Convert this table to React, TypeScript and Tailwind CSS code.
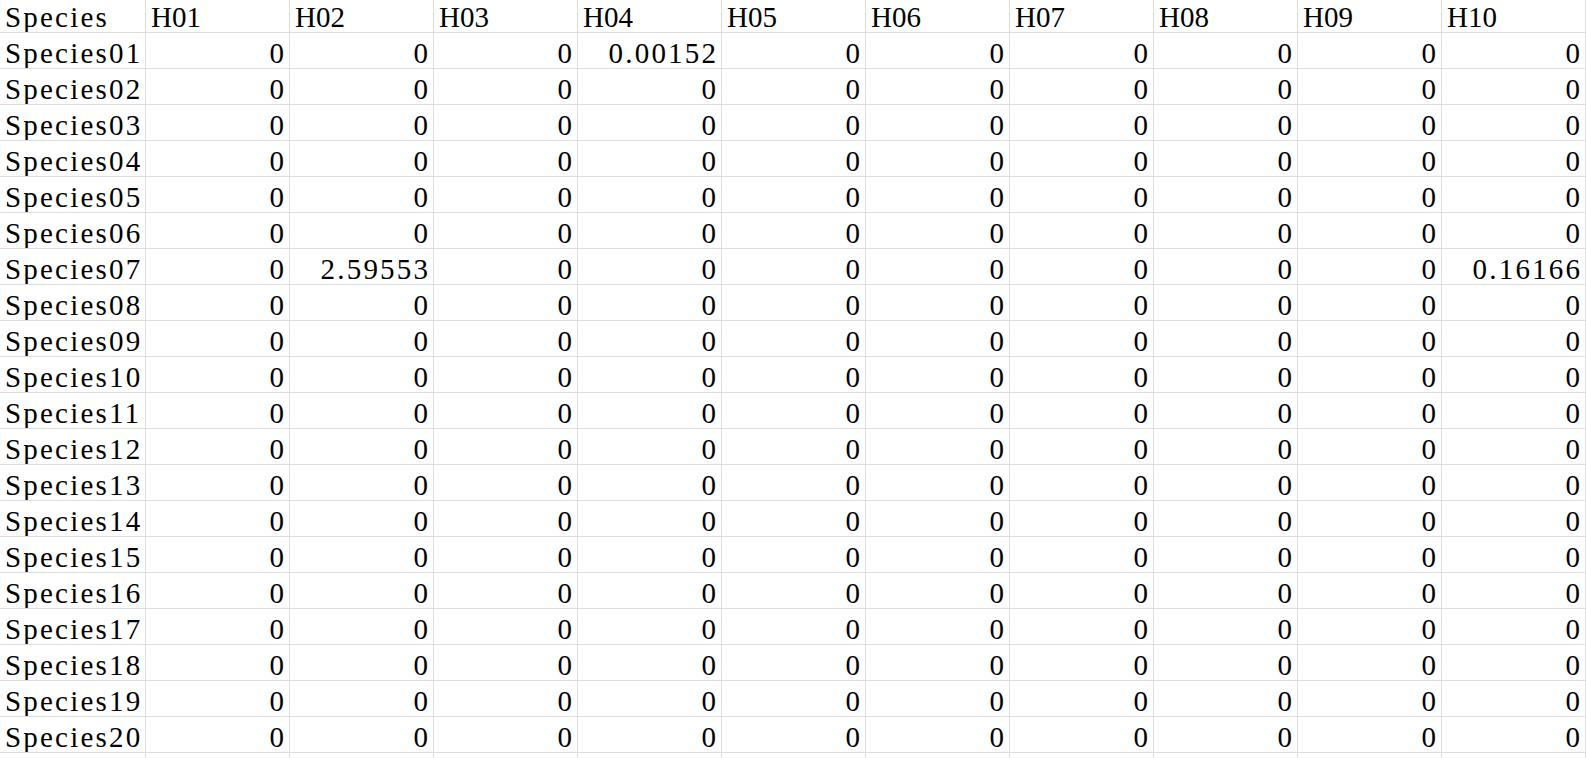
const headers = ["H01", "H02", "H03", "H04", "H05", "H06", "H07", "H08", "H09", "H10"];

// non-zero values keyed by "row-col"
const values: Record<string, string> = {
  "1-4": "0.00152",
  "7-2": "2.59553",
  "7-10": "0.16166",
};

const species = Array.from({ length: 20 }, (_, i) => `Species${String(i + 1).padStart(2, "0")}`);

const font = { fontFamily: '"Liberation Serif", "Noto Sans CJK SC", serif' };

function Cell({ children, right, spaced }: { children?: React.ReactNode; right?: boolean; spaced?: boolean }) {
  return (
    <div
      className={`flex h-full items-end overflow-hidden whitespace-nowrap border-r border-b border-[#dedede] px-[5px] ${
        right ? "justify-end" : "justify-start"
      }`}
    >
      {spaced ? <span className="-mr-[2.2px] tracking-[2.2px]">{children}</span> : children}
    </div>
  );
}

export default function App() {
  return (
    <div className="h-[758px] w-[1586px] overflow-hidden bg-white text-[29px] leading-[29px] text-black" style={font}>
      <div className="grid grid-cols-[146px_repeat(10,144px)] grid-rows-[33px_repeat(20,36px)_5px]">
        <Cell spaced>Species</Cell>
        {headers.map((h) => (
          <Cell key={h}>{h}</Cell>
        ))}
        {species.map((s, r) => (
          <div key={s} className="contents">
            <Cell spaced>{s}</Cell>
            {headers.map((h, c) => {
              const v = values[`${r + 1}-${c + 1}`];
              return (
                <Cell key={h} right spaced={!!v}>
                  {v ?? "0"}
                </Cell>
              );
            })}
          </div>
        ))}
        {Array.from({ length: 11 }, (_, i) => (
          <div key={i} className="border-r border-[#dedede]" />
        ))}
      </div>
    </div>
  );
}
